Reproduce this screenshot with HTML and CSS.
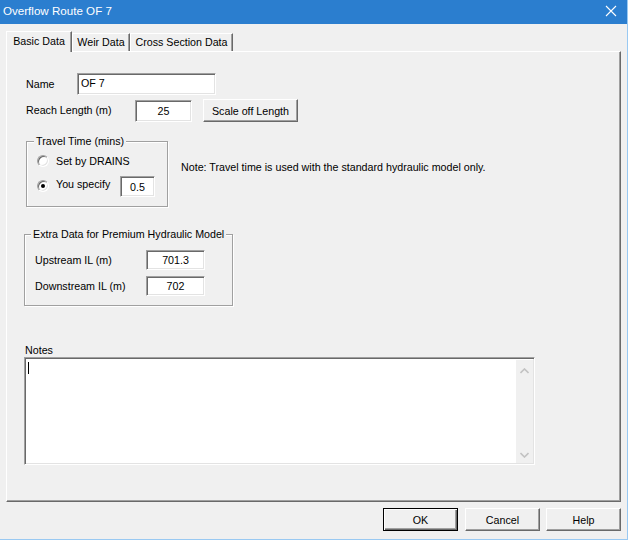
FILE: index.html
```html
<!DOCTYPE html>
<html>
<head>
<meta charset="utf-8">
<link rel="stylesheet" href="styles.css">
</head>
<body>
<div class="window">
  <div class="titlebar">
    <span class="title">Overflow Route OF 7</span>
    <svg class="close" width="12" height="12" viewBox="0 0 12 12"><path d="M1 1 L11 11 M11 1 L1 11" stroke="#fff" stroke-width="1.1" fill="none"/></svg>
  </div>
  <div class="client">
    <div class="tabs">
      <div class="tab active">Basic Data</div>
      <div class="tab t2">Weir Data</div>
      <div class="tab t3">Cross Section Data</div>
    </div>
    <div class="panel">
      <div class="row r-name">
        <span class="lbl w-name">Name</span>
        <div class="edit e-name">OF 7</div>
      </div>
      <div class="row r-reach">
        <span class="lbl w-reach">Reach Length (m)</span>
        <div class="edit e-reach center">25</div>
        <div class="btn b-scale">Scale off Length</div>
      </div>
      <div class="row r-travel">
        <div class="group g-travel">
          <div class="legend">Travel Time (mins)</div>
          <div class="radio-row rr1">
            <span class="radio"></span>
            <span class="rlbl">Set by DRAINS</span>
          </div>
          <div class="radio-row rr2">
            <span class="radio on"></span>
            <span class="rlbl w-spec">You specify</span>
            <div class="edit e-spec center">0.5</div>
          </div>
        </div>
        <div class="note">Note: Travel time is used with the standard hydraulic model only.</div>
      </div>
      <div class="group g-extra">
        <div class="legend l-extra">Extra Data for Premium Hydraulic Model</div>
        <div class="irow ir1">
          <span class="lbl w-il">Upstream IL (m)</span>
          <div class="edit e-il center">701.3</div>
        </div>
        <div class="irow ir2">
          <span class="lbl w-il">Downstream IL (m)</span>
          <div class="edit e-il center">702</div>
        </div>
      </div>
      <div class="notes-lbl">Notes</div>
      <div class="memo">
        <div class="memo-text"><span class="caret"></span></div>
        <div class="vscroll">
          <svg width="9" height="6" viewBox="0 0 9 6"><path d="M0.5 5 L4.5 1 L8.5 5" stroke="#c2c2c2" stroke-width="1.6" fill="none"/></svg>
          <svg width="9" height="6" viewBox="0 0 9 6"><path d="M0.5 1 L4.5 5 L8.5 1" stroke="#c2c2c2" stroke-width="1.6" fill="none"/></svg>
        </div>
      </div>
    </div>
    <div class="buttons">
      <div class="btn b-dlg b-ok">OK</div>
      <div class="btn b-dlg b-cancel">Cancel</div>
      <div class="btn b-dlg b-help">Help</div>
    </div>
  </div>
</div>
</body>
</html>
```
FILE: styles.css
```css
html, body {
  margin: 0;
  padding: 0;
  background: #f0f0f0;
}
body {
  width: 628px;
  height: 540px;
  overflow: hidden;
  font-family: "Liberation Sans", Arial, sans-serif;
  font-size: 10.7px;
  color: #000;
}
.window {
  width: 628px;
  height: 540px;
  box-sizing: border-box;
  border-right: 1px solid #99c9f2;
  border-bottom: 1px solid #99c9f2;
  background: #f0f0f0;
}
.titlebar {
  height: 24px;
  background: #2b7ecf;
  display: flex;
  align-items: center;
  justify-content: space-between;
  padding: 0 10px 0 3px;
}
.title {
  color: #fff;
  font-size: 11.6px;
  line-height: 14px;
  margin-top: -2px;
}
.close {
  display: block;
  margin-top: -2px;
}
.client {
  padding: 7px 0 0 6px;
}
.tabs {
  display: flex;
  height: 20px;
  align-items: flex-start;
  position: relative;
  z-index: 2;
}
.tab {
  box-sizing: border-box;
  height: 18px;
  margin-top: 2px;
  border-top: 1px solid #fff;
  border-left: 1px solid #fff;
  border-right: 1px solid #696969;
  box-shadow: inset -1px 0 0 #a0a0a0;
  text-align: center;
  line-height: 17px;
  background: #f0f0f0;
}
.tab.active {
  height: 21px;
  margin-top: 0;
  width: 66px;
  line-height: 19px;
}
.tab.t2 { width: 58px; }
.tab.t3 { width: 103px; }
.panel {
  box-sizing: border-box;
  width: 615px;
  height: 451px;
  border-top: 1px solid #fff;
  border-left: 1px solid #fff;
  border-right: 1px solid #696969;
  border-bottom: 1px solid #696969;
  box-shadow: inset -1px -1px 0 #a0a0a0;
  padding-left: 19px;
  padding-top: 21px;
}
.row {
  display: flex;
  align-items: center;
}
.lbl {
  display: block;
  line-height: 14px;
  white-space: nowrap;
}
.w-name { width: 51px; }
.w-reach { width: 109px; }
.edit {
  box-sizing: border-box;
  background: #fff;
  border-top: 1px solid #a0a0a0;
  border-left: 1px solid #a0a0a0;
  border-right: 1px solid #fff;
  border-bottom: 1px solid #fff;
  box-shadow: inset 1px 1px 0 #696969, inset -1px -1px 0 #e3e3e3;
  padding: 0 3px;
  display: flex;
  align-items: center;
  white-space: nowrap;
}
.edit.center { justify-content: center; }
.e-name { width: 139px; height: 22px; padding-left: 3px; padding-bottom: 3px; }
.r-reach { margin-top: 5px; align-items: flex-start; }
.r-reach .lbl { margin-top: 3px; }
.e-reach { width: 57px; height: 22px; }
.btn {
  box-sizing: border-box;
  background: #f0f0f0;
  border-top: 1px solid #fff;
  border-left: 1px solid #fff;
  border-right: 1px solid #696969;
  border-bottom: 1px solid #696969;
  box-shadow: inset -1px -1px 0 #a0a0a0;
  display: flex;
  align-items: center;
  justify-content: center;
  white-space: nowrap;
}
.b-scale {
  width: 95px;
  height: 23px;
  margin-left: 11px;
  margin-top: -1px;
}
.r-travel {
  margin-top: 19px;
  align-items: flex-start;
}
.group {
  box-sizing: border-box;
  border: 1px solid #a0a0a0;
  box-shadow: inset 1px 1px 0 #fff, 1px 1px 0 #fff;
}
.legend {
  width: max-content;
  margin: -8px 0 0 -3px;
  padding: 0 2px;
  line-height: 14px;
  background: #f0f0f0;
}
.g-travel {
  width: 142px;
  height: 66px;
  padding-left: 10px;
}
.radio-row {
  display: flex;
  align-items: center;
}
.rr1 { margin-top: 6px; height: 14px; }
.rr2 { margin-top: 8px; align-items: flex-start; }
.rr2 .radio { margin-top: 4px; }
.rr2 .rlbl { margin-top: 1px; }
.radio {
  box-sizing: border-box;
  width: 12px;
  height: 12px;
  border-radius: 50%;
  background: #fff;
  border: 1px solid;
  border-color: #a0a0a0 #fff #fff #a0a0a0;
  box-shadow: inset 1px 1px 0 #696969, inset -1px -1px 0 #e3e3e3;
  display: flex;
  align-items: center;
  justify-content: center;
}
.radio.on::after {
  content: "";
  width: 4px;
  height: 4px;
  border-radius: 50%;
  background: #000;
}
.rlbl {
  margin-left: 7px;
  line-height: 14px;
  white-space: nowrap;
}
.w-spec { width: 64px; }
.e-spec { width: 35px; height: 21px; }
.note {
  margin-left: 13px;
  margin-top: 19px;
  line-height: 14px;
  white-space: nowrap;
}
.g-extra {
  width: 209px;
  height: 72px;
  margin-left: -2px;
  margin-top: 27px;
  padding-left: 10px;
}
.legend.l-extra { margin-left: -4px; }
.irow {
  display: flex;
  align-items: center;
  height: 20px;
}
.ir1 { margin-top: 9px; }
.ir2 { margin-top: 6px; }
.w-il { width: 111px; }
.e-il { width: 59px; height: 20px; }
.notes-lbl {
  margin-top: 38px;
  margin-left: -1px;
  line-height: 13px;
  height: 13px;
}
.memo {
  box-sizing: border-box;
  width: 511px;
  height: 108px;
  margin-left: -2px;
  background: #fff;
  border-top: 1px solid #a0a0a0;
  border-left: 1px solid #a0a0a0;
  border-right: 1px solid #fff;
  border-bottom: 1px solid #fff;
  box-shadow: inset 1px 1px 0 #696969, inset -1px -1px 0 #e3e3e3;
  display: flex;
  padding: 2px 1px 1px 2px;
}
.memo-text {
  flex: 1;
  padding: 2px 0 0 1px;
}
.caret {
  display: block;
  width: 1px;
  height: 12px;
  background: #000;
}
.vscroll {
  width: 17px;
  background: #f0f0f0;
  display: flex;
  flex-direction: column;
  justify-content: space-between;
  align-items: center;
  padding: 8px 0 5px;
  box-sizing: border-box;
}
.vscroll svg { display: block; }
.buttons {
  display: flex;
  justify-content: flex-end;
  margin-top: 6px;
  padding-right: 6px;
}
.b-dlg {
  width: 75px;
  height: 23px;
}
.b-ok {
  border: 1px solid #000;
  box-shadow: inset 1px 1px 0 #fff, inset -1px -1px 0 #696969, inset -2px -2px 0 #a0a0a0;
}
.b-cancel { margin-left: 7px; }
.b-help { margin-left: 6px; }
```
